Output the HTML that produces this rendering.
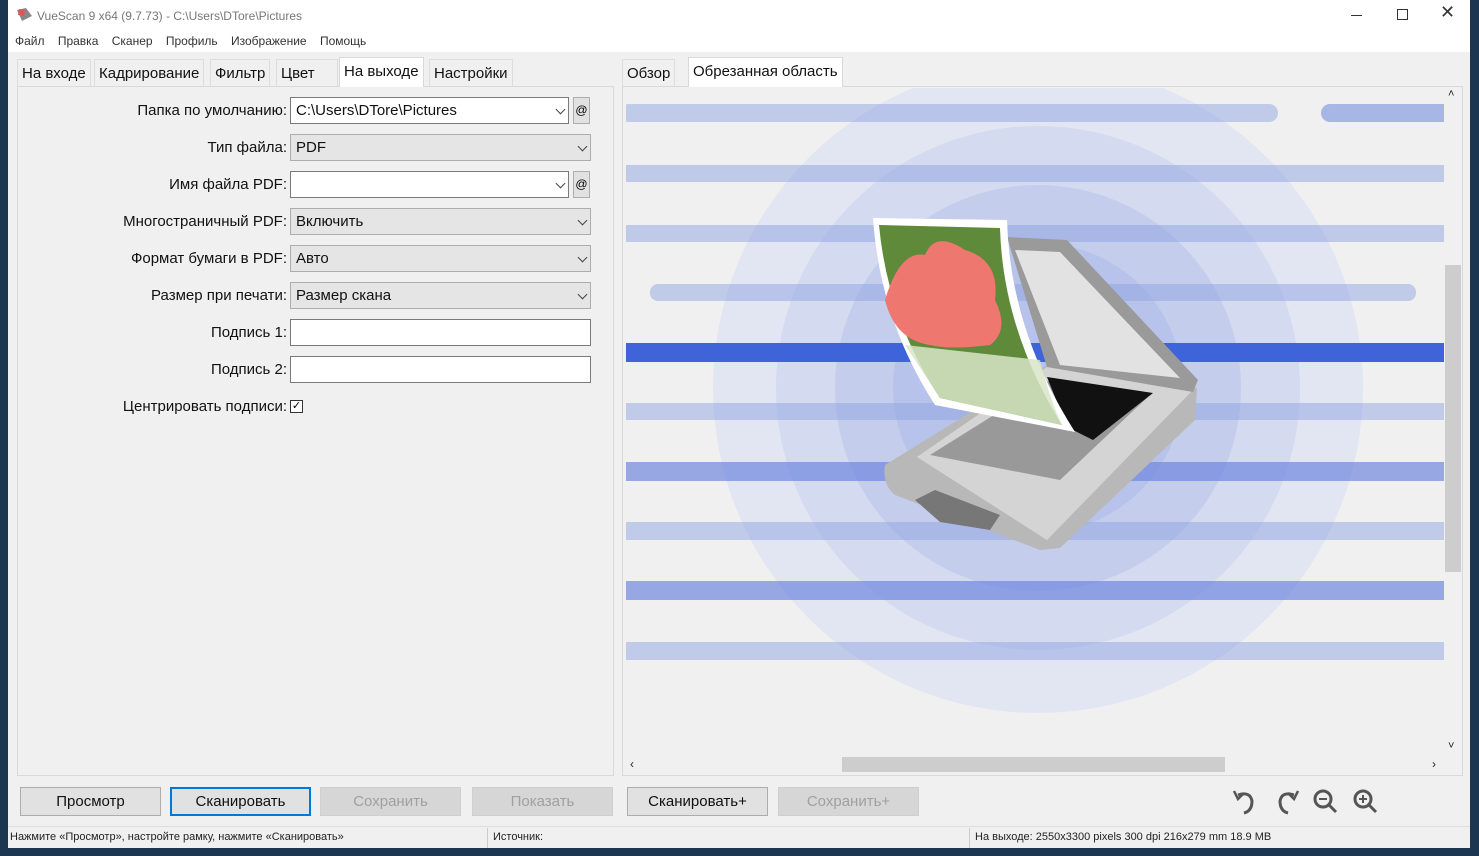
<!DOCTYPE html>
<html><head><meta charset="utf-8"><style>
*{box-sizing:border-box;margin:0;padding:0}
body{width:1479px;height:856px;overflow:hidden;background:#1c3550;font-family:"Liberation Sans","DejaVu Sans",sans-serif;position:relative}
.win{position:absolute;left:8px;top:0;width:1462px;height:848px;background:#f0f0f0}
.abs{position:absolute}
.t{font-size:12px;color:#222;white-space:nowrap}
.lbl{position:absolute;right:1183px;font-size:15px;color:#111;white-space:nowrap}
.fld{position:absolute;height:27px;border:1px solid #7a7a7a;background:#fff;font-size:15px;padding:4px 5px;color:#111}
.sel{background:#e5e5e5;border-color:#adadad}
.arr{position:absolute;right:4px;top:8px;width:7px;height:7px;border-right:1px solid #444;border-bottom:1px solid #444;transform:rotate(45deg)}
.at{position:absolute;width:17px;height:27px;background:#e1e1e1;border:1px solid #adadad;font-size:12px;text-align:center;line-height:25px}
.btn{position:absolute;top:787px;height:29px;width:141px;background:#e1e1e1;border:1px solid #adadad;font-size:15px;text-align:center;line-height:27px;color:#111}
.dis{color:#a0a0a0;background:#d6d6d6;border-color:#cfcfcf}
.tab{position:absolute;top:59px;height:27px;font-size:15px;color:#111;padding:5px 4px;background:#f0f0f0;border:1px solid #ddd;border-bottom:none}
</style></head><body>
<div class="win">
 <div class="abs" style="left:0;top:0;width:1462px;height:52px;background:#fff"></div>
 <svg class="abs" style="left:8px;top:7px" width="18" height="16"><path d="M1 3 L10 1 L16 9 L6 14 Z" fill="#888"/><path d="M3 2 L9 3 L8 9 L2 8Z" fill="#d55"/></svg>
 <div class="abs t" style="left:29px;top:9px;color:#777">VueScan 9 x64 (9.7.73) - C:\Users\DTore\Pictures</div>
 <div class="abs" style="left:1343px;top:15px;width:11px;height:1px;background:#333"></div>
 <div class="abs" style="left:1389px;top:9px;width:11px;height:11px;border:1px solid #333"></div>
 <div class="abs" style="left:1432px;top:2px;font-size:18px;color:#333">✕</div>
 <div class="abs t" style="left:7px;top:34px;color:#333">Файл &nbsp;&nbsp; Правка &nbsp;&nbsp; Сканер &nbsp;&nbsp; Профиль &nbsp;&nbsp; Изображение &nbsp;&nbsp; Помощь</div>

 <div class="abs" style="left:9px;top:86px;width:597px;height:690px;border:1px solid #d9d9d9;background:#f0f0f0"></div>
 <div class="tab" style="left:9px">На входе</div>
 <div class="tab" style="left:86px">Кадрирование</div>
 <div class="tab" style="left:202px">Фильтр</div>
 <div class="tab" style="left:268px;width:62px">Цвет</div>
 <div class="tab" style="left:331px;top:57px;height:30px;background:#fff;border-color:#d9d9d9">На выходе</div>
 <div class="tab" style="left:421px">Настройки</div>

 <div class="lbl" style="top:102px">Папка по умолчанию:</div>
 <div class="fld" style="left:282px;top:97px;width:279px">C:\Users\DTore\Pictures<span class="arr"></span></div>
 <div class="at" style="left:565px;top:97px">@</div>
 <div class="lbl" style="top:139px">Тип файла:</div>
 <div class="fld sel" style="left:282px;top:134px;width:301px">PDF<span class="arr"></span></div>
 <div class="lbl" style="top:176px">Имя файла PDF:</div>
 <div class="fld" style="left:282px;top:171px;width:279px"><span class="arr"></span></div>
 <div class="at" style="left:565px;top:171px">@</div>
 <div class="lbl" style="top:213px">Многостраничный PDF:</div>
 <div class="fld sel" style="left:282px;top:208px;width:301px">Включить<span class="arr"></span></div>
 <div class="lbl" style="top:250px">Формат бумаги в PDF:</div>
 <div class="fld sel" style="left:282px;top:245px;width:301px">Авто<span class="arr"></span></div>
 <div class="lbl" style="top:287px">Размер при печати:</div>
 <div class="fld sel" style="left:282px;top:282px;width:301px">Размер скана<span class="arr"></span></div>
 <div class="lbl" style="top:324px">Подпись 1:</div>
 <div class="fld" style="left:282px;top:319px;width:301px"></div>
 <div class="lbl" style="top:361px">Подпись 2:</div>
 <div class="fld" style="left:282px;top:356px;width:301px"></div>
 <div class="lbl" style="top:398px">Центрировать подписи:</div>
 <div class="abs" style="left:282px;top:400px;width:13px;height:13px;border:1px solid #333;background:#fff;font-size:11px;line-height:11px;text-align:center">✓</div>

 <div class="abs" style="left:614px;top:86px;width:841px;height:690px;border:1px solid #d9d9d9;background:#f0f0f0"></div>
 <div class="tab" style="left:614px">Обзор</div>
 <div class="tab" style="left:680px;top:57px;height:30px;background:#fff;border-color:#d9d9d9">Обрезанная область</div>
 <svg class="abs" style="left:618px;top:88px" width="818" height="667">
  <g transform="translate(-626,-88)">
   <circle cx="1038" cy="388" r="325" fill="#e2e5f2"/>
   <circle cx="1038" cy="388" r="262" fill="#d4daef"/>
   <circle cx="1038" cy="388" r="203" fill="#c5cded"/>
   <circle cx="1038" cy="388" r="145" fill="#b8c3eb"/>
   <g fill="#8fa3e2" opacity="0.5">
    <rect x="620" y="104" width="658" height="18" rx="9"/>
    <rect x="620" y="165" width="840" height="17"/>
    <rect x="620" y="225" width="840" height="17"/>
    <rect x="650" y="284" width="766" height="17" rx="8"/>
    <rect x="620" y="403" width="840" height="17"/>
    <rect x="620" y="522" width="840" height="18"/>
    <rect x="620" y="642" width="840" height="18"/>
   </g>
   <rect x="1321" y="104" width="140" height="18" rx="9" fill="#8fa3e2" opacity="0.75"/>
   <g fill="#6f88de" opacity="0.7">
    <rect x="620" y="462" width="840" height="19"/>
    <rect x="620" y="581" width="840" height="19"/>
   </g>
   <rect x="620" y="343" width="840" height="19" fill="#3f63d8"/>
   <path d="M885 465 L1047 365 L1197 388 L1195 420 L1060 548 L1040 550 L895 495 Q882 485 885 465Z" fill="#b8b8b8"/>
   <path d="M917 457 L1047 367 L1193 390 L1047 540Z" fill="#d4d4d4"/>
   <path d="M930 455 L1050 380 L1150 395 L1060 480Z" fill="#999"/>
   <path d="M1047 377 L1153 393 L1093 440 L1067 427Z" fill="#111"/>
   <path d="M1007 237 L1067 240 L1198 380 L1193 392 L1047 367Z" fill="#9a9a9a"/>
   <path d="M1015 250 L1060 252 L1180 378 L1060 365Z" fill="#e2e2e2"/>
   <path d="M915 500 L935 490 L1000 515 L990 530 L940 522Z" fill="#777"/>
   <path d="M873 218 L1007 220 Q1010 330 1075 432 L935 405 Q880 320 873 218Z" fill="#fff"/>
   <path d="M879 225 L1000 228 Q1003 330 1062 425 L940 398 Q888 320 879 225Z" fill="#5f8a3a"/>
   <path d="M885 300 Q900 250 925 255 Q935 230 965 250 Q1000 260 995 300 Q1010 330 990 345 Q950 350 930 345 Q895 340 885 300Z" fill="#ee7770"/>
   <path d="M905 345 L1040 360 Q1050 400 1062 425 L940 398Z" fill="#d8e5c8" opacity="0.85"/>
  </g>
 </svg>
 <div class="abs" style="left:1437px;top:88px;width:17px;height:667px;background:#f0f0f0"></div>
 <div class="abs" style="left:1437px;top:265px;width:16px;height:307px;background:#cdcdcd"></div>
 <div class="abs t" style="left:1440px;top:88px;font-size:11px">˄</div>
 <div class="abs t" style="left:1440px;top:740px;font-size:11px">˅</div>
 <div class="abs" style="left:618px;top:756px;width:819px;height:17px;background:#f0f0f0"></div>
 <div class="abs" style="left:834px;top:757px;width:383px;height:15px;background:#cdcdcd"></div>
 <div class="abs t" style="left:622px;top:757px">‹</div>
 <div class="abs t" style="left:1424px;top:757px">›</div>

 <div class="btn" style="left:12px">Просмотр</div>
 <div class="btn" style="left:162px;border:2px solid #0078d7;line-height:25px">Сканировать</div>
 <div class="btn dis" style="left:312px">Сохранить</div>
 <div class="btn dis" style="left:464px">Показать</div>
 <div class="btn" style="left:619px">Сканировать+</div>
 <div class="btn dis" style="left:770px">Сохранить+</div>
 <svg class="abs" style="left:1222px;top:787px" width="160" height="30" fill="none" stroke="#555" stroke-width="3">
  <path d="M8 8 Q20 4 22 14 Q22 24 14 26"/><path d="M4 4 L8 12 L14 6" stroke-width="2.5"/>
  <path d="M64 8 Q52 4 50 14 Q50 24 58 26"/><path d="M68 4 L64 12 L58 6" stroke-width="2.5"/>
  <circle cx="93" cy="12" r="8"/><path d="M99 18 L106 25"/><path d="M89 12 H97" stroke-width="2"/>
  <circle cx="133" cy="12" r="8"/><path d="M139 18 L146 25"/><path d="M129 12 H137 M133 8 V16" stroke-width="2"/>
 </svg>

 <div class="abs" style="left:0;top:826px;width:1462px;height:22px;border-top:1px solid #ddd"></div>
 <div class="abs" style="left:479px;top:828px;width:1px;height:20px;background:#ccc"></div>
 <div class="abs" style="left:961px;top:828px;width:1px;height:20px;background:#ccc"></div>
 <div class="abs t" style="left:2px;top:831px;font-size:11px">Нажмите «Просмотр», настройте рамку, нажмите «Сканировать»</div>
 <div class="abs t" style="left:485px;top:831px;font-size:11px">Источник:</div>
 <div class="abs t" style="left:967px;top:831px;font-size:11px">На выходе: 2550x3300 pixels 300 dpi 216x279 mm 18.9 MB</div>
</div>
</body></html>
